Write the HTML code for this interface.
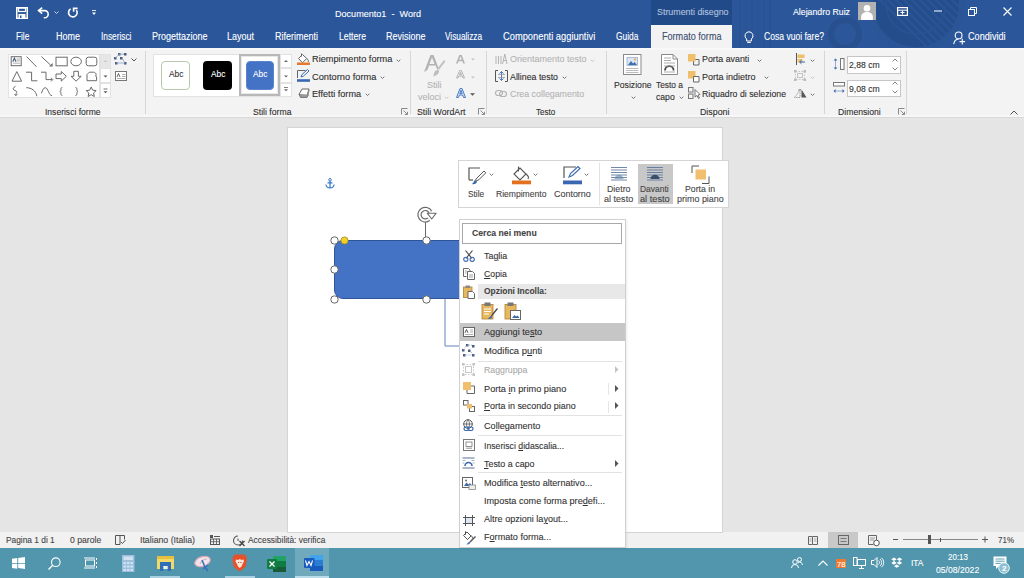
<!DOCTYPE html>
<html><head><meta charset="utf-8"><style>
html,body{margin:0;padding:0;width:1024px;height:578px;overflow:hidden;background:#e4e4e4;font-family:'Liberation Sans', sans-serif;}
.t{position:absolute;white-space:pre;line-height:1;transform-origin:0 0;-webkit-text-stroke:0.1px currentColor;}
svg{overflow:visible}
</style></head><body>
<div style="position:absolute;left:0px;top:0px;width:1024px;height:48px;background:#2b579a"></div><svg style="position:absolute;left:640px;top:0px;" width="384" height="48" viewBox="0 0 384 48">
<defs><clipPath id="tb"><rect x="0" y="0" width="384" height="48"/></clipPath><clipPath id="bc"><circle cx="276" cy="4" r="44"/></clipPath></defs>
<g clip-path="url(#tb)" fill="none">
<circle cx="276" cy="4" r="49" fill="#2a5596"/>
<circle cx="276" cy="4" r="43" fill="#244d8b"/>
<g clip-path="url(#bc)" stroke="#2a5495" stroke-width="2.4">
<path d="M200 -40l120 120M208 -40l120 120M216 -40l120 120M224 -40l120 120M232 -40l120 120M240 -40l120 120M248 -40l120 120M256 -40l120 120M264 -40l120 120M272 -40l120 120"/>
</g>
<circle cx="276" cy="4" r="30" stroke="#2a5396" stroke-width="1.5"/>
<circle cx="205" cy="34" r="14" stroke="#28508f" stroke-width="6"/>
<g stroke="#2a5394" stroke-width="2">
<line x1="100" y1="0" x2="100" y2="48"/><line x1="106" y1="0" x2="106" y2="48"/><line x1="112" y1="0" x2="112" y2="48"/><line x1="118" y1="0" x2="118" y2="48"/><line x1="124" y1="0" x2="124" y2="48"/><line x1="130" y1="0" x2="130" y2="48"/>
</g>
</g></svg><div style="position:absolute;left:651px;top:0px;width:81px;height:25px;background:#214a89"></div><div style="position:absolute;left:651px;top:25px;width:81px;height:23px;background:#f3f3f3"></div><svg style="position:absolute;left:16px;top:7px;" width="12" height="12" viewBox="0 0 12 12"><path d="M0.75 0.75h10.5v10.5h-10.5z" fill="none" stroke="#fff" stroke-width="1.5"/><rect x="2.5" y="1" width="7" height="3.5" fill="none" stroke="#fff" stroke-width="1.2"/><rect x="2.5" y="7" width="7" height="4" fill="#fff"/><rect x="4" y="8.5" width="1.5" height="2.5" fill="#2b579a"/></svg><svg style="position:absolute;left:36px;top:6px;" width="14" height="13" viewBox="0 0 14 13"><path d="M6.2 1.6L2.6 4.6L6.2 7.6" fill="none" stroke="#fff" stroke-width="1.6"/><path d="M2.6 4.6H8.6A3.6 3.6 0 0 1 8.6 11.8H7.8" fill="none" stroke="#fff" stroke-width="1.6"/></svg><svg style="position:absolute;left:54px;top:11px;" width="5" height="3" viewBox="0 0 5 3"><path d="M0.5 0.5l2 2l2-2" fill="none" stroke="#c9d6ea" stroke-width="1"/></svg><svg style="position:absolute;left:66px;top:6px;" width="13" height="13" viewBox="0 0 13 13"><path d="M4.6 2.9A4.3 4.3 0 1 0 10.4 4.1" fill="none" stroke="#fff" stroke-width="1.6"/><path d="M11.6 2.4H7.6V5.8" fill="none" stroke="#fff" stroke-width="1.6"/></svg><svg style="position:absolute;left:92px;top:10px;" width="5" height="6" viewBox="0 0 5 6"><rect x="0" y="0" width="4" height="1" fill="#dfe7f3"/><path d="M0 2.5h4l-2 2.5z" fill="#fff"/></svg><div class="t" style="left:335px;top:9px;font-size:9.9px;color:#ffffff;font-weight:normal;transform:scaleX(0.9181);">Documento1  -  Word</div><div class="t" style="left:656.5px;top:7px;font-size:9.6px;color:#b4c3de;font-weight:normal;transform:scaleX(0.9246);">Strumenti disegno</div><div class="t" style="left:793px;top:7px;font-size:9.8px;color:#ffffff;font-weight:normal;transform:scaleX(0.8946);">Alejandro Ruiz</div><div style="position:absolute;left:858px;top:2px;width:18px;height:18px;background:#b2b2b2"></div><svg style="position:absolute;left:858px;top:2px;" width="18" height="18" viewBox="0 0 18 18"><circle cx="9" cy="6.2" r="3.3" fill="#fff"/><path d="M3.2 18v-3.5a5.8 4.5 0 0 1 11.6 0v3.5z" fill="#fff"/></svg><svg style="position:absolute;left:897px;top:7px;" width="11" height="9" viewBox="0 0 11 9"><rect x="0.6" y="0.6" width="9.8" height="7.8" fill="none" stroke="#fff" stroke-width="1.2"/><line x1="0.6" y1="3.2" x2="10.4" y2="3.2" stroke="#fff" stroke-width="1"/><path d="M3.5 5.5h4M5.5 3.5v4" stroke="#fff" stroke-width="1"/></svg><svg style="position:absolute;left:934px;top:10px;" width="8" height="2" viewBox="0 0 8 2"><rect x="0" y="0.5" width="8" height="1" fill="#fff"/></svg><svg style="position:absolute;left:968px;top:7px;" width="9" height="9" viewBox="0 0 9 9"><rect x="0.5" y="2.5" width="6" height="6" fill="none" stroke="#fff" stroke-width="1"/><path d="M2.5 2.5v-2h6v6h-2" fill="none" stroke="#fff" stroke-width="1"/></svg><svg style="position:absolute;left:1003px;top:7px;" width="9" height="9" viewBox="0 0 9 9"><path d="M0.5 0.5l8 8M8.5 0.5l-8 8" stroke="#fff" stroke-width="1.1"/></svg><div class="t" style="left:15.6px;top:32px;font-size:10px;color:#ffffff;font-weight:normal;transform:scaleX(0.8248);">File</div><div class="t" style="left:55.7px;top:32px;font-size:10px;color:#ffffff;font-weight:normal;transform:scaleX(0.8993);">Home</div><div class="t" style="left:100.6px;top:32px;font-size:10px;color:#ffffff;font-weight:normal;transform:scaleX(0.8286);">Inserisci</div><div class="t" style="left:152.3px;top:32px;font-size:10px;color:#ffffff;font-weight:normal;transform:scaleX(0.8992);">Progettazione</div><div class="t" style="left:227.3px;top:32px;font-size:10px;color:#ffffff;font-weight:normal;transform:scaleX(0.8991);">Layout</div><div class="t" style="left:275.2px;top:32px;font-size:10px;color:#ffffff;font-weight:normal;transform:scaleX(0.8996);">Riferimenti</div><div class="t" style="left:339px;top:32px;font-size:10px;color:#ffffff;font-weight:normal;transform:scaleX(0.8670);">Lettere</div><div class="t" style="left:386.3px;top:32px;font-size:10px;color:#ffffff;font-weight:normal;transform:scaleX(0.8993);">Revisione</div><div class="t" style="left:444.5px;top:32px;font-size:10px;color:#ffffff;font-weight:normal;transform:scaleX(0.8251);">Visualizza</div><div class="t" style="left:502.5px;top:32px;font-size:10px;color:#ffffff;font-weight:normal;transform:scaleX(0.9318);">Componenti aggiuntivi</div><div class="t" style="left:615.6px;top:32px;font-size:10px;color:#ffffff;font-weight:normal;transform:scaleX(0.8393);">Guida</div><div class="t" style="left:661.5px;top:32px;font-size:10px;color:#3a4c6e;font-weight:normal;transform:scaleX(0.9073);">Formato forma</div><svg style="position:absolute;left:744px;top:31px;" width="10" height="13" viewBox="0 0 10 13"><path d="M5 0.8a4 4 0 0 0 -2.4 7.2v2h4.8v-2a4 4 0 0 0 -2.4 -7.2z" fill="none" stroke="#fff" stroke-width="1"/><path d="M3.2 11.5h3.6" stroke="#fff" stroke-width="1"/></svg><div class="t" style="left:763.7px;top:32px;font-size:10px;color:#ffffff;font-weight:normal;transform:scaleX(0.8566);">Cosa vuoi fare?</div><svg style="position:absolute;left:953px;top:31px;" width="13" height="14" viewBox="0 0 13 14"><circle cx="5.6" cy="4.4" r="3.4" fill="none" stroke="#fff" stroke-width="1.1"/><path d="M0.7 13.2c.5-3 2.3-5 4.9-5.2M8 8.6" fill="none" stroke="#fff" stroke-width="1.1"/><path d="M6.5 10.6h5.5M9.25 7.8v5.6" stroke="#fff" stroke-width="1.1"/></svg><div class="t" style="left:968px;top:32px;font-size:10px;color:#ffffff;font-weight:normal;transform:scaleX(0.9139);">Condividi</div><div style="position:absolute;left:0px;top:48px;width:1024px;height:69px;background:#f3f3f3"></div><div style="position:absolute;left:0px;top:115px;width:1024px;height:2px;background:#f7f7f7"></div><div style="position:absolute;left:0px;top:117px;width:1024px;height:1px;background:#d9d9d9"></div><div style="position:absolute;left:0px;top:48px;width:1024px;height:2px;background:#f8f8f8"></div><div style="position:absolute;left:145px;top:51px;width:1px;height:63px;background:#d6d6d6"></div><div style="position:absolute;left:410px;top:51px;width:1px;height:63px;background:#d6d6d6"></div><div style="position:absolute;left:486px;top:51px;width:1px;height:63px;background:#d6d6d6"></div><div style="position:absolute;left:605.5px;top:51px;width:1px;height:63px;background:#d6d6d6"></div><div style="position:absolute;left:824px;top:51px;width:1px;height:63px;background:#d6d6d6"></div><div style="position:absolute;left:906px;top:51px;width:1px;height:63px;background:#d6d6d6"></div><div class="t" style="left:44.5px;top:107px;font-size:9.4px;color:#2e2e2e;font-weight:normal;transform:scaleX(0.9105);">Inserisci forme</div><div class="t" style="left:252.8px;top:107px;font-size:9.4px;color:#2e2e2e;font-weight:normal;transform:scaleX(0.9235);">Stili forma</div><div class="t" style="left:417.3px;top:107px;font-size:9.4px;color:#2e2e2e;font-weight:normal;transform:scaleX(0.9341);">Stili WordArt</div><div class="t" style="left:536px;top:107px;font-size:9.4px;color:#2e2e2e;font-weight:normal;transform:scaleX(0.8614);">Testo</div><div class="t" style="left:700px;top:107px;font-size:9.4px;color:#2e2e2e;font-weight:normal;transform:scaleX(0.9403);">Disponi</div><div class="t" style="left:837.8px;top:107px;font-size:9.4px;color:#2e2e2e;font-weight:normal;transform:scaleX(0.9229);">Dimensioni</div><svg style="position:absolute;left:401px;top:108px;" width="7" height="7" viewBox="0 0 7 7"><path d="M0.5 6.5v-6h6" fill="none" stroke="#8a8a8a" stroke-width="1"/><path d="M2.5 2.5l4 4M3.8 6.5h2.7v-2.7" fill="none" stroke="#8a8a8a" stroke-width="1"/></svg><svg style="position:absolute;left:477.5px;top:108px;" width="7" height="7" viewBox="0 0 7 7"><path d="M0.5 6.5v-6h6" fill="none" stroke="#8a8a8a" stroke-width="1"/><path d="M2.5 2.5l4 4M3.8 6.5h2.7v-2.7" fill="none" stroke="#8a8a8a" stroke-width="1"/></svg><svg style="position:absolute;left:897.5px;top:108px;" width="7" height="7" viewBox="0 0 7 7"><path d="M0.5 6.5v-6h6" fill="none" stroke="#8a8a8a" stroke-width="1"/><path d="M2.5 2.5l4 4M3.8 6.5h2.7v-2.7" fill="none" stroke="#8a8a8a" stroke-width="1"/></svg><svg style="position:absolute;left:1010px;top:110px;" width="8" height="5" viewBox="0 0 8 5"><path d="M0.5 4.5l3.5-3.5l3.5 3.5" fill="none" stroke="#555" stroke-width="1"/></svg><div style="position:absolute;left:7.5px;top:53.5px;width:92px;height:44.5px;background:#fff;border:1px solid #e2e2e2;box-sizing:border-box"></div><div style="position:absolute;left:99.5px;top:53.5px;width:11px;height:15px;background:#e6e6e6;border:1px solid #e2e2e2;box-sizing:border-box"></div><div style="position:absolute;left:99.5px;top:68.2px;width:11px;height:15px;background:#fff;border:1px solid #e2e2e2;box-sizing:border-box"></div><div style="position:absolute;left:99.5px;top:83px;width:11px;height:15px;background:#fff;border:1px solid #e2e2e2;box-sizing:border-box"></div><svg style="position:absolute;left:99.5px;top:53.5px;" width="11" height="45" viewBox="0 0 11 45"><path d="M3.5 8l2-2l2 2z" fill="#c8c8c8"/><path d="M3.5 21.6h4l-2 2z" fill="#555"/><rect x="3.5" y="34.6" width="4" height="0.8" fill="#555"/><path d="M3.5 37.3h4l-2 2z" fill="#555"/></svg><svg style="position:absolute;left:7.5px;top:53.5px;" width="92" height="45" viewBox="0 0 92 45"><g fill="none" stroke="#6a6a6a" stroke-width="1">
<rect x="3.2" y="2.7" width="10" height="9"/><path d="M8.5 5h3.5M8.5 6.8h3.5M5 9.2h7" stroke="#9a9a9a" stroke-width="0.8"/><path d="M4.8 7.8l1.6-3.6l1.6 3.6" stroke="#4a5a78" stroke-width="1.1"/>
<path d="M18.5 2.5l10 10.3"/>
<path d="M33.3 2.5l9.3 8.6"/><path d="M41 12.6h3.6v-3.6z" fill="#6a6a6a" stroke="none"/>
<rect x="48" y="3.2" width="11.2" height="8.6"/>
<ellipse cx="68.1" cy="7.5" rx="5.3" ry="4.3"/>
<rect x="78.2" y="3.2" width="10.6" height="8.6" rx="2.2"/>
<path d="M4 27.2l4.8-9.6l4.8 9.6z"/>
<path d="M18 18.2h5.6v8.6h5.8"/>
<path d="M33 18.2h5v7.4h6"/><path d="M43 23.8l1.8 1.8l-1.8 1.8"/>
<path d="M48 20h5.3v-2.5l5 4.8l-5 4.8v-2.5h-5.3z"/>
<path d="M65.8 17.3h4.6v5h2.8l-5.1 4.8l-5.1-4.8h2.8z"/>
<path d="M79 20.5l2.3-2.3h4.2c1.8 0 2.6 1.3 2.6 2.5c0 .6-.2 1.1-.6 1.5l1.1 .5v4h-9.6z"/>
<path d="M7.5 32.3c-2.3 1.3-3 2.6-1.6 3.7c1.3 1 3.3 .7 2.8 2.5c-.3 1-1.3 1.5-.7 2.8M6.5 40.5l1.6 1l1.3-1.5"/>
<path d="M18.3 33.7c5.2 0 9.7 3 10.5 8.5"/>
<path d="M33.4 39.3c1.2-3.5 2.3-5.6 3.8-5.6c3 0 3.5 8 6.8 8"/>
<path d="M54.3 33.5c-1 0-1.4 .5-1.4 1.8s.1 1.7-1.1 2.2c1.2 .5 1.1 .9 1.1 2.2s.4 1.8 1.4 1.8"/>
<path d="M67.5 33.5c1 0 1.4 .5 1.4 1.8s-.1 1.7 1.1 2.2c-1.2 .5-1.1 .9-1.1 2.2s-.4 1.8-1.4 1.8"/>
<path d="M83.2 33l1.5 3.2l3.5.4l-2.6 2.4l.7 3.5l-3.1-1.8l-3.1 1.8l.7-3.5l-2.6-2.4l3.5-.4z"/>
</g></svg><svg style="position:absolute;left:114px;top:53px;" width="14" height="12" viewBox="0 0 14 12"><g fill="#4a5a80"><rect x="4" y="0" width="2.5" height="2.5"/><rect x="10" y="0" width="2.5" height="2.5"/><rect x="0" y="4" width="2.5" height="2.5"/><rect x="6" y="4" width="2.5" height="2.5"/><rect x="1" y="9" width="2.5" height="2.5"/><rect x="10" y="9" width="2.5" height="2.5"/></g><path d="M5 1.2h5M1.2 5.2l4-4M8 5l3 5M2 10h9" stroke="#8a9ac0" stroke-width="0.8" fill="none"/></svg><svg style="position:absolute;left:131px;top:58px;" width="6" height="4" viewBox="0 0 6 4"><path d="M0.5 0.5l2.5 2.5l2.5-2.5" fill="none" stroke="#555" stroke-width="1"/></svg><svg style="position:absolute;left:115px;top:71px;" width="12" height="10" viewBox="0 0 12 10"><rect x="0.5" y="0.5" width="11" height="9" fill="#fff" stroke="#777"/><path d="M7 3.5h3.5M7 5.5h3.5M2 7.5h8.5" stroke="#999" stroke-width="0.8"/><path d="M2 6l1.5-3.5l1.5 3.5" fill="none" stroke="#555" stroke-width="0.9"/></svg><div style="position:absolute;left:153.3px;top:53.6px;width:139px;height:43.7px;background:#fff;border:1px solid #e2e2e2;box-sizing:border-box"></div><div style="position:absolute;left:161px;top:61px;width:28.7px;height:28.5px;background:#fff;border:1px solid #b9c9ae;border-radius:4px;box-sizing:border-box"></div><div style="position:absolute;left:203px;top:61px;width:29px;height:28.5px;background:#000;border-radius:4px"></div><div style="position:absolute;left:239.2px;top:54.4px;width:41px;height:41.4px;background:#fff;border:2px solid #b8b8b8;box-sizing:border-box;box-shadow:inset 0 0 0 1px #e8e8e8"></div><div style="position:absolute;left:245.5px;top:61px;width:28.5px;height:28.5px;background:#4472c4;border:1px solid #5a84cc;border-radius:4px;box-sizing:border-box"></div><div class="t" style="left:168.7px;top:70px;font-size:9px;color:#333;font-weight:normal;transform:scaleX(0.9217);">Abc</div><div class="t" style="left:210.7px;top:70px;font-size:9px;color:#fff;font-weight:normal;transform:scaleX(0.9217);">Abc</div><div class="t" style="left:253px;top:70px;font-size:9px;color:#fff;font-weight:normal;transform:scaleX(0.9217);">Abc</div><div style="position:absolute;left:280.3px;top:54px;width:12px;height:14px;border:1px solid #e2e2e2;box-sizing:border-box;background:#fff"></div><div style="position:absolute;left:280.3px;top:68px;width:12px;height:14.5px;border:1px solid #e2e2e2;box-sizing:border-box;background:#fff"></div><div style="position:absolute;left:280.3px;top:82.5px;width:12px;height:14.8px;border:1px solid #e2e2e2;box-sizing:border-box;background:#fff"></div><svg style="position:absolute;left:280.3px;top:54px;" width="12" height="44" viewBox="0 0 12 44"><path d="M4 8l2-2l2 2z" fill="#666"/><path d="M4 21.5h4l-2 2z" fill="#666"/><rect x="4" y="33" width="4" height="0.8" fill="#666"/><path d="M4 35.2h4l-2 2z" fill="#666"/></svg><svg style="position:absolute;left:297px;top:52.5px;" width="13" height="12" viewBox="0 0 13 12"><path d="M5.5 1.5l-4 4l4 4.2l4.2-4.2z" fill="#fff" stroke="#666" stroke-width="1"/><path d="M4.5 0.5v3" stroke="#666" stroke-width="1"/><path d="M9.7 5.5c1.5 1 2 2.5 1.5 3.5" fill="none" stroke="#666" stroke-width="1"/><rect x="0" y="9.5" width="13" height="2.5" fill="#e57a2e"/></svg><svg style="position:absolute;left:297px;top:70px;" width="13" height="12" viewBox="0 0 13 12"><path d="M0.5 8v-7.5h8" fill="none" stroke="#666" stroke-width="1"/><path d="M4 7l1-2.5l5.5-5l1.5 1.5l-5.5 5z" fill="#fff" stroke="#3a68b0" stroke-width="1"/><rect x="0" y="9.2" width="13" height="2.6" fill="#3a68b0"/></svg><svg style="position:absolute;left:297.5px;top:88px;" width="12" height="10" viewBox="0 0 12 10"><path d="M1 6.5l3-5.5h7l-2 6.5z" fill="#fff" stroke="#666" stroke-width="1"/><path d="M1 6.5l1.5 3h6.5l1.5-3" fill="#9a9a9a" stroke="#666" stroke-width="0.8"/><path d="M9 7.5l2-6.5l0.5 1.5l-1.5 6z" fill="#8a8a8a"/></svg><div class="t" style="left:311.9px;top:54px;font-size:9.4px;color:#2e2e2e;font-weight:normal;transform:scaleX(0.9827);">Riempimento forma</div><div class="t" style="left:311.9px;top:72px;font-size:9.4px;color:#2e2e2e;font-weight:normal;transform:scaleX(0.9886);">Contorno forma</div><div class="t" style="left:311.9px;top:89px;font-size:9.4px;color:#2e2e2e;font-weight:normal;transform:scaleX(0.9747);">Effetti forma</div><svg style="position:absolute;left:395.8px;top:58.5px;" width="5" height="3" viewBox="0 0 5 3"><path d="M0.7 0.7l1.8 1.8l1.8-1.8" fill="none" stroke="#666" stroke-width="0.9"/></svg><svg style="position:absolute;left:380.3px;top:75.8px;" width="5" height="3" viewBox="0 0 5 3"><path d="M0.7 0.7l1.8 1.8l1.8-1.8" fill="none" stroke="#666" stroke-width="0.9"/></svg><svg style="position:absolute;left:365.3px;top:93px;" width="5" height="3" viewBox="0 0 5 3"><path d="M0.7 0.7l1.8 1.8l1.8-1.8" fill="none" stroke="#666" stroke-width="0.9"/></svg><svg style="position:absolute;left:423px;top:54px;" width="23" height="23" viewBox="0 0 23 23"><path d="M1 18l6.5-17h3l5.2 13.5l-1.2 1.6l-1.8-4.6h-6.6l-1.7 4.5z M6.5 10h5l-2.5-6.8z" fill="#b3b3b3"/><path d="M14.5 14.5l6.5-8.5l1.5 1.3l-6.5 8.5z" fill="#c0c0c0"/><path d="M11 19.5c.5-2 2-3.5 3.5-3.5c1 0 1.8 .8 1.5 2c-.5 2-3 3.5-6 4.5c.8-1 .8-2 1-3z" fill="#bdbdbd"/></svg><div class="t" style="left:426.7px;top:80px;font-size:9.4px;color:#b3b3b3;font-weight:normal;transform:scaleX(0.9597);">Stili</div><div class="t" style="left:418px;top:92px;font-size:9.4px;color:#b3b3b3;font-weight:normal;transform:scaleX(0.9596);">veloci</div><svg style="position:absolute;left:444px;top:96px;" width="5" height="3" viewBox="0 0 5 3"><path d="M0.7 0.7l1.8 1.8l1.8-1.8" fill="none" stroke="#c0c0c0" stroke-width="0.9"/></svg><svg style="position:absolute;left:456px;top:54.5px;" width="9" height="8.5" viewBox="0 0 9 8.5"><path d="M0 8.5l3.3-8.5h2.4l3.3 8.5h-1.8l-.8-2.2h-3.8l-.8 2.2z M3.2 4.8h2.6l-1.3-3.5z" fill="#b3b3b3"/></svg><svg style="position:absolute;left:456px;top:70px;" width="9" height="8.5" viewBox="0 0 9 8.5"><path d="M0.5 8l3.2-7.5h1.6l3.2 7.5h-1.5l-.8-2h-3.4l-.8 2z M3.5 4.8h2l-1-2.6z" fill="none" stroke="#b3b3b3" stroke-width="1"/></svg><svg style="position:absolute;left:455.5px;top:88px;" width="10" height="10" viewBox="0 0 10 10"><path d="M0.5 9.5l3.5-9h2l3.5 9h-2l-.9-2.5h-3.2l-.9 2.5z M3.8 5.5h2.4l-1.2-3.3z" fill="#dce6f4" stroke="#4a7cc4" stroke-width="1"/></svg><svg style="position:absolute;left:471px;top:58px;" width="4" height="3" viewBox="0 0 4 3"><path d="M0 0.5h4l-2 2z" fill="#c4c4c4"/></svg><svg style="position:absolute;left:471px;top:75.5px;" width="4" height="3" viewBox="0 0 4 3"><path d="M0 0.5h4l-2 2z" fill="#c4c4c4"/></svg><svg style="position:absolute;left:470px;top:92.5px;" width="5" height="3" viewBox="0 0 5 3"><path d="M0 0.3h5l-2.5 2.5z" fill="#555"/></svg><svg style="position:absolute;left:494.5px;top:52.5px;" width="12" height="12" viewBox="0 0 12 12"><g stroke="#b3b3b3" stroke-width="1" fill="none"><path d="M1 11v-8M3.5 11v-8M6 11v-8"/><path d="M7.5 11l2.3-10l2.2 10M8.3 7.5h3"/></g></svg><svg style="position:absolute;left:494.5px;top:70px;" width="13" height="12" viewBox="0 0 13 12"><path d="M3 0.5h-2.5v11h2.5M10 0.5h2.5v11h-2.5" fill="none" stroke="#555" stroke-width="1"/><path d="M6.5 1.5v9" stroke="#4a7cc4" stroke-width="1"/><path d="M4.5 3.5l2-2l2 2M4.5 8.5l2 2l2-2" fill="none" stroke="#4a7cc4" stroke-width="1"/><path d="M3 4.5h7M3 7.5h7" stroke="#999" stroke-width="0.8"/></svg><svg style="position:absolute;left:494.5px;top:89.5px;" width="12" height="7" viewBox="0 0 12 7"><rect x="0.5" y="0.5" width="7" height="5" rx="2.5" fill="none" stroke="#b3b3b3" stroke-width="1.2"/><rect x="4.5" y="1.5" width="7" height="5" rx="2.5" fill="none" stroke="#b3b3b3" stroke-width="1.2"/></svg><div class="t" style="left:509.5px;top:54px;font-size:9.4px;color:#b3b3b3;font-weight:normal;transform:scaleX(0.9594);">Orientamento testo</div><div class="t" style="left:509.5px;top:72px;font-size:9.4px;color:#2e2e2e;font-weight:normal;transform:scaleX(0.9397);">Allinea testo</div><div class="t" style="left:509.5px;top:89px;font-size:9.4px;color:#b3b3b3;font-weight:normal;transform:scaleX(0.9428);">Crea collegamento</div><svg style="position:absolute;left:590px;top:58.5px;" width="5" height="3" viewBox="0 0 5 3"><path d="M0.7 0.7l1.8 1.8l1.8-1.8" fill="none" stroke="#c0c0c0" stroke-width="0.9"/></svg><svg style="position:absolute;left:561.5px;top:75.8px;" width="5" height="3" viewBox="0 0 5 3"><path d="M0.7 0.7l1.8 1.8l1.8-1.8" fill="none" stroke="#666" stroke-width="0.9"/></svg><svg style="position:absolute;left:622.5px;top:54px;" width="19" height="21" viewBox="0 0 19 21"><rect x="0.5" y="0.5" width="17.5" height="20" fill="#fff" stroke="#8a8a8a"/><rect x="4" y="3.5" width="10.5" height="8" fill="#dbe6f2" stroke="#9ab0cc" stroke-width="0.8"/><path d="M5 11l3-4l2 2.5l1.5-1.5l2.5 3z" fill="#3e6fb0"/><circle cx="12" cy="5.5" r="1" fill="#f0a030"/><path d="M3 14.5h12.5M3 16.5h12.5M3 18.5h12.5" stroke="#aaa" stroke-width="0.8"/></svg><div class="t" style="left:613.8px;top:80px;font-size:9.4px;color:#2e2e2e;font-weight:normal;transform:scaleX(0.9224);">Posizione</div><svg style="position:absolute;left:630.5px;top:95.5px;" width="5" height="3" viewBox="0 0 5 3"><path d="M0.7 0.7l1.8 1.8l1.8-1.8" fill="none" stroke="#666" stroke-width="0.9"/></svg><svg style="position:absolute;left:660.5px;top:54px;" width="17" height="21" viewBox="0 0 17 21"><path d="M0.5 0.5h11.5l4.5 4.5v15.5h-16z" fill="#fff" stroke="#8a8a8a"/><path d="M12 0.5v4.5h4.5" fill="none" stroke="#8a8a8a"/><path d="M3 4h7M3 6.5h7M3 9h11M3 18h11" stroke="#999" stroke-width="0.8"/><path d="M4 16.5a4.3 4.3 0 0 1 8.6 0" fill="none" stroke="#444" stroke-width="1.8"/><path d="M3 12h11" stroke="#999" stroke-width="0.8"/></svg><div class="t" style="left:655.5px;top:80px;font-size:9.4px;color:#2e2e2e;font-weight:normal;transform:scaleX(0.8930);">Testo a</div><div class="t" style="left:655.5px;top:92px;font-size:9.4px;color:#2e2e2e;font-weight:normal;transform:scaleX(0.9192);">capo</div><svg style="position:absolute;left:678.5px;top:95.5px;" width="5" height="3" viewBox="0 0 5 3"><path d="M0.7 0.7l1.8 1.8l1.8-1.8" fill="none" stroke="#666" stroke-width="0.9"/></svg><svg style="position:absolute;left:688px;top:53.5px;" width="12" height="11" viewBox="0 0 12 11"><path d="M5.5 5.5h5.5v5.5h-5.5z" fill="none" stroke="#666" stroke-width="1"/><rect x="0" y="0" width="7.5" height="7.5" fill="#f0bf6c"/></svg><svg style="position:absolute;left:688px;top:70.5px;" width="12" height="11" viewBox="0 0 12 11"><rect x="0" y="0" width="7.5" height="7.5" fill="#f0bf6c"/><path d="M5.5 5.5h5.5v5.5h-5.5z" fill="#fff" stroke="#666" stroke-width="1"/></svg><svg style="position:absolute;left:687.5px;top:87px;" width="13" height="13" viewBox="0 0 13 13"><g fill="none" stroke="#777" stroke-width="1"><rect x="0.5" y="0.5" width="4.5" height="4.5"/><rect x="0.5" y="7" width="4.5" height="4.5"/></g><path d="M7 2.5l5 5l-2 .5l1.5 3l-1 .5l-1.5-3l-2 1.5z" fill="#fff" stroke="#666" stroke-width="0.9"/></svg><div class="t" style="left:701.9px;top:54px;font-size:9.4px;color:#2e2e2e;font-weight:normal;transform:scaleX(0.9454);">Porta avanti</div><div class="t" style="left:701.9px;top:72px;font-size:9.4px;color:#2e2e2e;font-weight:normal;transform:scaleX(0.9612);">Porta indietro</div><div class="t" style="left:701.9px;top:89px;font-size:9.4px;color:#2e2e2e;font-weight:normal;transform:scaleX(0.9327);">Riquadro di selezione</div><svg style="position:absolute;left:757px;top:58.5px;" width="5" height="3" viewBox="0 0 5 3"><path d="M0.7 0.7l1.8 1.8l1.8-1.8" fill="none" stroke="#666" stroke-width="0.9"/></svg><svg style="position:absolute;left:764px;top:75.8px;" width="5" height="3" viewBox="0 0 5 3"><path d="M0.7 0.7l1.8 1.8l1.8-1.8" fill="none" stroke="#666" stroke-width="0.9"/></svg><svg style="position:absolute;left:795.5px;top:52.5px;" width="10" height="12" viewBox="0 0 10 12"><path d="M0.5 0v12" stroke="#555" stroke-width="1"/><rect x="1.5" y="1.5" width="7" height="3.5" fill="#f0bf6c"/><rect x="1.5" y="6" width="5" height="3.5" fill="#f0bf6c"/><path d="M9 9h-5M5.5 7.2l-2 1.8l2 1.8" fill="none" stroke="#3a68b0" stroke-width="1"/></svg><svg style="position:absolute;left:809.5px;top:58.5px;" width="5" height="3" viewBox="0 0 5 3"><path d="M0.7 0.7l1.8 1.8l1.8-1.8" fill="none" stroke="#666" stroke-width="0.9"/></svg><svg style="position:absolute;left:793.5px;top:70px;" width="12" height="11" viewBox="0 0 12 11"><g fill="none" stroke="#c4c4c4" stroke-width="1"><rect x="1.5" y="1.5" width="9" height="8" stroke-dasharray="1.5 1.5"/><rect x="3.5" y="3.5" width="5" height="4"/></g><g fill="#bbb"><rect x="0" y="0" width="2.5" height="2.5"/><rect x="9.5" y="0" width="2.5" height="2.5"/><rect x="0" y="8.5" width="2.5" height="2.5"/><rect x="9.5" y="8.5" width="2.5" height="2.5"/></g></svg><svg style="position:absolute;left:809.5px;top:75.8px;" width="5" height="3" viewBox="0 0 5 3"><path d="M0.7 0.7l1.8 1.8l1.8-1.8" fill="none" stroke="#c0c0c0" stroke-width="0.9"/></svg><svg style="position:absolute;left:793.5px;top:88.5px;" width="13" height="9" viewBox="0 0 13 9"><path d="M0.5 8.5l5.5-7.5v7.5z" fill="none" stroke="#888" stroke-width="0.9" stroke-dasharray="1.4 1"/><path d="M7.5 8.5v-8l5 8z" fill="#555"/><path d="M4 1.5a3 3 0 0 1 3-1" fill="none" stroke="#777" stroke-width="0.8"/></svg><svg style="position:absolute;left:809.5px;top:92.5px;" width="5" height="3" viewBox="0 0 5 3"><path d="M0.7 0.7l1.8 1.8l1.8-1.8" fill="none" stroke="#666" stroke-width="0.9"/></svg><svg style="position:absolute;left:832.5px;top:58px;" width="12" height="12" viewBox="0 0 12 12"><path d="M2.5 0.5l2 2h-4z M2.5 11.5l2-2h-4z" fill="#3a68b0"/><path d="M2.5 2.5v7" stroke="#3a68b0" stroke-width="1" stroke-dasharray="1 1"/><rect x="7.5" y="0.5" width="3.5" height="11" fill="#fff" stroke="#777" stroke-width="1"/></svg><svg style="position:absolute;left:832.5px;top:82px;" width="12" height="12" viewBox="0 0 12 12"><rect x="0.5" y="0.5" width="11" height="3.5" fill="#fff" stroke="#777" stroke-width="1"/><path d="M0.5 9l2-2v4z M11.5 9l-2-2v4z" fill="#3a68b0"/><path d="M2.5 9h7" stroke="#3a68b0" stroke-width="1" stroke-dasharray="1 1"/></svg><div style="position:absolute;left:847.2px;top:56.2px;width:53.4px;height:17.4px;background:#fff;border:1px solid #c6c6c6;box-sizing:border-box"></div><div style="position:absolute;left:847.2px;top:80px;width:53.4px;height:16.5px;background:#fff;border:1px solid #c6c6c6;box-sizing:border-box"></div><div class="t" style="left:849.2px;top:60px;font-size:9.4px;color:#2e2e2e;font-weight:normal;transform:scaleX(0.9233);">2,88 cm</div><div class="t" style="left:849.2px;top:84px;font-size:9.4px;color:#2e2e2e;font-weight:normal;transform:scaleX(0.9233);">9,08 cm</div><svg style="position:absolute;left:891.5px;top:57.5px;" width="6" height="14" viewBox="0 0 6 14"><path d="M0.5 3.5l2.5-2.5l2.5 2.5M0.5 9.5l2.5 2.5l2.5-2.5" fill="none" stroke="#777" stroke-width="0.9"/></svg><svg style="position:absolute;left:891.5px;top:81px;" width="6" height="14" viewBox="0 0 6 14"><path d="M0.5 3.5l2.5-2.5l2.5 2.5M0.5 9.5l2.5 2.5l2.5-2.5" fill="none" stroke="#777" stroke-width="0.9"/></svg><div style="position:absolute;left:0px;top:531.5px;width:1024px;height:16.5px;background:#f1f1f1"></div><div style="position:absolute;left:828px;top:531.5px;width:30px;height:16px;background:#c8c8c8"></div><div class="t" style="left:6.3px;top:536px;font-size:9px;color:#444;font-weight:normal;transform:scaleX(0.9268);">Pagina 1 di 1</div><div class="t" style="left:70px;top:536px;font-size:9px;color:#444;font-weight:normal;transform:scaleX(0.9591);">0 parole</div><div class="t" style="left:139.5px;top:536px;font-size:9px;color:#444;font-weight:normal;transform:scaleX(0.9729);">Italiano (Italia)</div><div class="t" style="left:247.5px;top:536px;font-size:9px;color:#444;font-weight:normal;transform:scaleX(0.9310);">Accessibilità: verifica</div><svg style="position:absolute;left:115px;top:534.5px;" width="12" height="10" viewBox="0 0 12 10"><path d="M0.5 0.5h4.5v9h-4.5z M5 0.5h4.5v4" fill="none" stroke="#555" stroke-width="1"/><path d="M6 7l1.5 1.5l3-3.5" fill="none" stroke="#555" stroke-width="1"/></svg><svg style="position:absolute;left:209.5px;top:534.5px;" width="10" height="10" viewBox="0 0 10 10"><rect x="0" y="0" width="3" height="3" fill="#555"/><path d="M4 1.5h6" stroke="#555" stroke-width="1"/><rect x="0.5" y="4" width="9" height="5.5" fill="none" stroke="#555" stroke-width="1"/><path d="M3.5 4v5.5M6.5 4v5.5M0.5 6.7h9" stroke="#555" stroke-width="0.8"/></svg><svg style="position:absolute;left:232.5px;top:534.5px;" width="12" height="11" viewBox="0 0 12 11"><path d="M5 1a4.5 4.5 0 1 0 4.5 4.5" fill="none" stroke="#555" stroke-width="1.1"/><path d="M5 3l1 2.5l-2 0z" fill="#555"/><path d="M6.5 6l5 5M11.5 6l-5 5" stroke="#444" stroke-width="1.3"/></svg><svg style="position:absolute;left:808px;top:534.5px;" width="10" height="10" viewBox="0 0 10 10"><path d="M0.5 1.5h4v8h-4zM5 1.5h4.5v8h-4.5" fill="none" stroke="#666" stroke-width="1"/><path d="M1.5 4h2M1.5 6h2M6 4h2.5M6 6h2.5" stroke="#888" stroke-width="0.7"/></svg><svg style="position:absolute;left:838px;top:534.5px;" width="11" height="10" viewBox="0 0 11 10"><rect x="0.5" y="0.5" width="10" height="9" fill="none" stroke="#666" stroke-width="1"/><path d="M2.5 3.5h6M2.5 6.5h6" stroke="#777" stroke-width="1"/></svg><svg style="position:absolute;left:868px;top:534.5px;" width="12" height="11" viewBox="0 0 12 11"><path d="M0.5 0.5h8v5M0.5 0.5v9h5" fill="none" stroke="#666" stroke-width="1"/><path d="M2 3h5M2 5h4" stroke="#888" stroke-width="0.8"/><circle cx="8.5" cy="8" r="2.8" fill="#fff" stroke="#555" stroke-width="1"/></svg><div style="position:absolute;left:893px;top:539px;width:5px;height:1px;background:#555"></div><div style="position:absolute;left:903px;top:539.3px;width:75px;height:1px;background:#888"></div><div style="position:absolute;left:928px;top:535px;width:3px;height:8.5px;background:#555"></div><div style="position:absolute;left:940px;top:537.5px;width:1px;height:4px;background:#555"></div><svg style="position:absolute;left:981.5px;top:535.5px;" width="6" height="7" viewBox="0 0 6 7"><path d="M0 3.5h6M3 0.5v6" stroke="#555" stroke-width="1"/></svg><div class="t" style="left:997.5px;top:536px;font-size:9px;color:#444;font-weight:normal;transform:scaleX(0.8881);">71%</div><div style="position:absolute;left:0px;top:548px;width:1024px;height:30px;background:#5196ad"></div><div style="position:absolute;left:295px;top:548px;width:34px;height:30px;background:#70a8bc"></div><svg style="position:absolute;left:12px;top:557px;" width="13" height="12" viewBox="0 0 13 12"><path d="M0 1.8l5.3-.8v5h-5.3zM6.2 0.9l6.8-.9v6h-6.8zM0 6.8h5.3v5l-5.3-.8zM6.2 6.8h6.8v5.2l-6.8-.9z" fill="#fff"/></svg><svg style="position:absolute;left:48px;top:556.5px;" width="13" height="13" viewBox="0 0 13 13"><circle cx="7.8" cy="5.2" r="4.3" fill="none" stroke="#fff" stroke-width="1.1"/><path d="M4.7 8.3l-4.2 4.2" stroke="#fff" stroke-width="1.3"/></svg><svg style="position:absolute;left:83.5px;top:556.5px;" width="14" height="12" viewBox="0 0 14 12"><rect x="1.5" y="3" width="9" height="6" fill="none" stroke="#fff" stroke-width="1"/><path d="M0 1h11M0 11h11M12.5 1v2M12.5 5v2M12.5 9v2" stroke="#fff" stroke-width="1"/></svg><svg style="position:absolute;left:122px;top:554.5px;" width="12.5" height="17" viewBox="0 0 12.5 17"><rect x="0" y="0" width="12.5" height="17" fill="#9cc0de"/><rect x="1.5" y="1.5" width="9.5" height="3.5" fill="#d0e2f2"/><g fill="#d0e2f2"><rect x="1.5" y="7" width="2.5" height="2"/><rect x="5" y="7" width="2.5" height="2"/><rect x="8.5" y="7" width="2.5" height="2"/><rect x="1.5" y="10.5" width="2.5" height="2"/><rect x="5" y="10.5" width="2.5" height="2"/><rect x="8.5" y="10.5" width="2.5" height="2"/><rect x="1.5" y="14" width="2.5" height="2"/><rect x="5" y="14" width="2.5" height="2"/><rect x="8.5" y="14" width="2.5" height="2"/></g></svg><svg style="position:absolute;left:157px;top:556px;" width="17" height="15" viewBox="0 0 17 15"><rect x="0" y="0" width="17" height="13" fill="#f3d86a"/><rect x="0" y="0" width="17" height="3" fill="#e8c040"/><path d="M3 6h11v9h-3.5v-5h-4v5h-3.5z" fill="#2f6fb8"/><rect x="6.5" y="10" width="4" height="3" fill="#e8f0f4"/></svg><div style="position:absolute;left:150px;top:576px;width:30px;height:2px;background:#a8d0e0"></div><svg style="position:absolute;left:193.5px;top:555px;" width="18" height="17" viewBox="0 0 18 17"><ellipse cx="8.5" cy="6.5" rx="8" ry="4.8" fill="#f2e4ea" stroke="#d8a8b8" stroke-width="1.2" transform="rotate(-18 8.5 6.5)"/><path d="M6 9c1-3 4-5 7-5" fill="none" stroke="#c89aa8" stroke-width="0.8"/><path d="M8 5l2.5 6M10 11l4 5M14 10l-5 4" stroke="#2f72c0" stroke-width="1.5"/></svg><svg style="position:absolute;left:232px;top:554px;" width="15.5" height="17.5" viewBox="0 0 15.5 17.5"><path d="M3 0.5h9.5l2.5 3l-.5 2l.5 1l-1.5 6.5l-5.8 4.5l-5.8-4.5l-1.5-6.5l.5-1l-.5-2z" fill="#e5522a"/><path d="M4 5.5l2 .5l1.75-1l1.75 1l2-.5l.5 2l-1.5 2.5l-1 2.5l-1.75 1.5l-1.75-1.5l-1-2.5l-1.5-2.5z" fill="#fbe6dc"/><path d="M6 8.5h1.2M8.3 8.5h1.2" stroke="#e5522a" stroke-width="1"/></svg><div style="position:absolute;left:225px;top:576px;width:30px;height:2px;background:#a8d0e0"></div><svg style="position:absolute;left:267px;top:555.5px;" width="19" height="16" viewBox="0 0 19 16"><rect x="6" y="0" width="13" height="16" rx="1" fill="#21a366"/><rect x="6" y="5" width="13" height="6" fill="#107c41"/><rect x="6" y="11" width="13" height="5" fill="#185c37"/><rect x="0" y="3" width="10" height="10" rx="1" fill="#107c41"/><path d="M2.5 5.5l5 5M7.5 5.5l-5 5" stroke="#fff" stroke-width="1.4"/></svg><svg style="position:absolute;left:303.5px;top:555px;" width="19" height="16" viewBox="0 0 19 16"><rect x="6" y="0" width="13" height="16" rx="1" fill="#41a5ee"/><rect x="6" y="5" width="13" height="6" fill="#2b7cd3"/><rect x="6" y="11" width="13" height="5" fill="#185abd"/><rect x="0" y="3" width="10.5" height="10" rx="1" fill="#185abd"/><path d="M1.5 5.5l1.5 5l2-4l2 4l1.5-5" fill="none" stroke="#fff" stroke-width="1.1"/></svg><div style="position:absolute;left:295px;top:576px;width:34px;height:2px;background:#b8dcea"></div><svg style="position:absolute;left:790.5px;top:557px;" width="12" height="11" viewBox="0 0 12 11"><circle cx="4" cy="5" r="2.3" fill="none" stroke="#fff" stroke-width="1"/><path d="M0.5 11a3.5 3.5 0 0 1 7 0" fill="none" stroke="#fff" stroke-width="1"/><circle cx="8.5" cy="2.5" r="2" fill="none" stroke="#fff" stroke-width="1"/><path d="M7 5.5a3 3 0 0 1 4.5 2.5" fill="none" stroke="#fff" stroke-width="1"/></svg><svg style="position:absolute;left:818px;top:560px;" width="10" height="6" viewBox="0 0 10 6"><path d="M0.5 5.5l4.5-4.5l4.5 4.5" fill="none" stroke="#fff" stroke-width="1.1"/></svg><div style="position:absolute;left:836px;top:558.5px;width:10px;height:9.5px;background:#f07a30"></div><div class="t" style="left:836.8px;top:561px;font-size:8px;color:#fff;font-weight:normal;transform:scaleX(0.9544);">78</div><svg style="position:absolute;left:853px;top:557px;" width="13" height="12" viewBox="0 0 13 12"><rect x="0.5" y="0.5" width="3.5" height="8" fill="none" stroke="#fff" stroke-width="1"/><rect x="4.5" y="2.5" width="8" height="6" fill="none" stroke="#fff" stroke-width="1"/><path d="M8.5 8.5v2.5M6 11.5h5" stroke="#fff" stroke-width="1"/></svg><svg style="position:absolute;left:871px;top:557px;" width="12" height="11" viewBox="0 0 12 11"><path d="M0.5 3.5h2.5l3-3v10l-3-3h-2.5z" fill="none" stroke="#fff" stroke-width="1"/><path d="M7.5 3.5a2.5 2.5 0 0 1 0 4M9 2a4.5 4.5 0 0 1 0 7M10.5 .8a6 6 0 0 1 0 9.4" fill="none" stroke="#fff" stroke-width="0.9"/></svg><svg style="position:absolute;left:890.5px;top:557px;" width="11.5" height="11" viewBox="0 0 11.5 11"><path d="M3 0.5l-2.7 1.8l2.7 1.8l2.7-1.8zM8.5 0.5l-2.7 1.8l2.7 1.8l2.7-1.8zM3 4.1l-2.7 1.8l2.7 1.8l2.7-1.8zM8.5 4.1l-2.7 1.8l2.7 1.8l2.7-1.8zM5.75 7.5l-2.7 1.8l2.7 1.5l2.7-1.5z" fill="#fff"/></svg><div class="t" style="left:911px;top:559px;font-size:9px;color:#fff;font-weight:normal;transform:scaleX(0.9368);">ITA</div><div class="t" style="left:947.5px;top:553px;font-size:9px;color:#fff;font-weight:normal;transform:scaleX(0.8877);">20:13</div><div class="t" style="left:936px;top:566px;font-size:9px;color:#fff;font-weight:normal;transform:scaleX(0.9590);">05/08/2022</div><svg style="position:absolute;left:993px;top:556px;" width="18" height="18" viewBox="0 0 18 18"><path d="M0.5 0.5h13v9.5h-7.5l-3 3v-3h-2.5z" fill="#fff"/><path d="M2.5 3h9M2.5 5.2h9M2.5 7.4h6" stroke="#4d93ad" stroke-width="0.9"/><circle cx="11" cy="12" r="5.3" fill="#8cbfd2" stroke="#e8f4f8" stroke-width="1"/></svg><div class="t" style="left:1001.8px;top:565px;font-size:8px;color:#fff;font-weight:bold;transform:scaleX(1.0105);">2</div><div style="position:absolute;left:0px;top:118px;width:1024px;height:413.5px;background:#e5e5e5"></div><div style="position:absolute;left:288px;top:127.5px;width:434px;height:404px;background:#fff;box-shadow:0 0 0 1px #d4d4d4"></div><svg style="position:absolute;left:324.5px;top:178px;" width="10" height="11" viewBox="0 0 10 11"><circle cx="5" cy="1.8" r="1.3" fill="none" stroke="#3a78c8" stroke-width="1"/><path d="M5 3v7M2.5 4.8h5M0.8 6.5c.5 2.5 2 3.5 4.2 3.5s3.7-1 4.2-3.5" fill="none" stroke="#3a78c8" stroke-width="1.2"/></svg><div style="position:absolute;left:334px;top:240px;width:150px;height:59px;background:#4472c4;border:1px solid #2f5597;border-radius:9px;box-sizing:border-box"></div><svg style="position:absolute;left:444px;top:298px;" width="16" height="50" viewBox="0 0 16 50"><path d="M1 1v47h15" fill="none" stroke="#6383b8" stroke-width="1"/></svg><svg style="position:absolute;left:416px;top:205px;" width="22" height="36" viewBox="0 0 22 36"><path d="M9.5 17v19" stroke="#6a6a6a" stroke-width="1"/><path d="M14.3 6.8A5.8 5.8 0 1 0 12.8 14.3" fill="none" stroke="#6a6a6a" stroke-width="4.4"/><path d="M14.3 6.8A5.8 5.8 0 1 0 12.8 14.3" fill="none" stroke="#fff" stroke-width="2"/><path d="M11.2 8.2h9l-4.5 5.8z" fill="#fff" stroke="#6a6a6a" stroke-width="1.1" stroke-linejoin="round"/><path d="M13.5 9.2h4.2l-2.1 2.7z" fill="#fff"/></svg><svg style="position:absolute;left:329.5px;top:235.5px;" width="9" height="9" viewBox="0 0 9 9"><circle cx="4.5" cy="4.5" r="3.7" fill="#fff" stroke="#666" stroke-width="1"/></svg><svg style="position:absolute;left:421.5px;top:235.5px;" width="9" height="9" viewBox="0 0 9 9"><circle cx="4.5" cy="4.5" r="3.7" fill="#fff" stroke="#666" stroke-width="1"/></svg><svg style="position:absolute;left:329.5px;top:265.0px;" width="9" height="9" viewBox="0 0 9 9"><circle cx="4.5" cy="4.5" r="3.7" fill="#fff" stroke="#666" stroke-width="1"/></svg><svg style="position:absolute;left:329.5px;top:294.5px;" width="9" height="9" viewBox="0 0 9 9"><circle cx="4.5" cy="4.5" r="3.7" fill="#fff" stroke="#666" stroke-width="1"/></svg><svg style="position:absolute;left:421.5px;top:294.5px;" width="9" height="9" viewBox="0 0 9 9"><circle cx="4.5" cy="4.5" r="3.7" fill="#fff" stroke="#666" stroke-width="1"/></svg><svg style="position:absolute;left:339.5px;top:235.5px;" width="9" height="9" viewBox="0 0 9 9"><circle cx="4.5" cy="4.5" r="3.6" fill="#f2d028" stroke="#a08a20" stroke-width="0.8"/></svg><div style="position:absolute;left:458px;top:160px;width:271px;height:47.5px;background:#fff;border:1px solid #d4d4d4;box-sizing:border-box"></div><div style="position:absolute;left:598.5px;top:163px;width:1px;height:42px;background:#e2e2e2"></div><div style="position:absolute;left:637.5px;top:163.6px;width:35.5px;height:40.8px;background:#c8c8c8"></div><svg style="position:absolute;left:468px;top:166.5px;" width="20" height="18" viewBox="0 0 20 18"><path d="M1 13v-12h11" fill="none" stroke="#555" stroke-width="1.2"/><path d="M1 13h4" stroke="#555" stroke-width="1.2"/><path d="M6 15l3-4l7-7l1.8 1.8l-7 7z" fill="#fff" stroke="#555" stroke-width="1"/><path d="M4 17c1.5-1 2-3 4-3.5l1 1.5c-1 2-3 2.5-5 2z" fill="#3a68b0"/></svg><svg style="position:absolute;left:488.5px;top:172.5px;" width="5" height="3" viewBox="0 0 5 3"><path d="M0.7 0.7l1.8 1.8l1.8-1.8" fill="none" stroke="#666" stroke-width="0.9"/></svg><svg style="position:absolute;left:512px;top:165.5px;" width="19" height="19" viewBox="0 0 19 19"><path d="M8 2l-6 6l6 6l6-6z" fill="#fff" stroke="#555" stroke-width="1.1"/><path d="M6.5 0.5v5" stroke="#555" stroke-width="1.1"/><path d="M14 8c2 1.5 3 3.5 2 5" fill="none" stroke="#555" stroke-width="1.1"/><rect x="0" y="14.5" width="19" height="3.8" fill="#e2701e"/></svg><svg style="position:absolute;left:533px;top:172.5px;" width="5" height="3" viewBox="0 0 5 3"><path d="M0.7 0.7l1.8 1.8l1.8-1.8" fill="none" stroke="#666" stroke-width="0.9"/></svg><svg style="position:absolute;left:562.5px;top:165.5px;" width="19" height="19" viewBox="0 0 19 19"><path d="M1 12v-11h12" fill="none" stroke="#555" stroke-width="1.2"/><path d="M6 11l1.5-3.5l7.5-7l2 2l-7.5 7z" fill="#fff" stroke="#3a68b0" stroke-width="1.1"/><rect x="0" y="14.5" width="19" height="3.8" fill="#3a68b0"/></svg><svg style="position:absolute;left:584px;top:172.5px;" width="5" height="3" viewBox="0 0 5 3"><path d="M0.7 0.7l1.8 1.8l1.8-1.8" fill="none" stroke="#666" stroke-width="0.9"/></svg><svg style="position:absolute;left:611px;top:167px;" width="17" height="15" viewBox="0 0 17 15"><path d="M3.5 12a4.5 4.2 0 0 1 9 0z" fill="#9ab4d0"/><g stroke="#7088a8" stroke-width="1"><path d="M0 0.5h16M0 3h16M0 5.5h16M0 8h16M0 10.5h16M0 13h16"/></g></svg><svg style="position:absolute;left:647px;top:167px;" width="17" height="15" viewBox="0 0 17 15"><g stroke="#6a80a0" stroke-width="1"><path d="M0 0.5h16M0 3h16M0 5.5h16M0 8h16M0 10.5h16M0 13h16"/></g><path d="M3.5 12a4.5 4.2 0 0 1 9 0z" fill="#3c4e6a"/></svg><svg style="position:absolute;left:690.5px;top:164.5px;" width="19" height="19" viewBox="0 0 19 19"><rect x="4.5" y="4.5" width="10.5" height="10" fill="#f0c070"/><path d="M1 8V1H8" fill="none" stroke="#555" stroke-width="1"/><path d="M18 11.5V18.5H11" fill="none" stroke="#555" stroke-width="1"/></svg><div class="t" style="left:468.4px;top:190px;font-size:9.2px;color:#444;font-weight:normal;transform:scaleX(0.9063);">Stile</div><div class="t" style="left:495.9px;top:190px;font-size:9.2px;color:#444;font-weight:normal;transform:scaleX(0.9312);">Riempimento</div><div class="t" style="left:554px;top:190px;font-size:9.2px;color:#444;font-weight:normal;transform:scaleX(0.9736);">Contorno</div><div class="t" style="left:607px;top:185px;font-size:9.2px;color:#444;font-weight:normal;transform:scaleX(0.9586);">Dietro</div><div class="t" style="left:604.4px;top:195px;font-size:9.2px;color:#444;font-weight:normal;transform:scaleX(0.9857);">al testo</div><div class="t" style="left:640.4px;top:185px;font-size:9.2px;color:#444;font-weight:normal;transform:scaleX(0.9180);">Davanti</div><div class="t" style="left:639.8px;top:195px;font-size:9.2px;color:#444;font-weight:normal;transform:scaleX(1.0025);">al testo</div><div class="t" style="left:685px;top:185px;font-size:9.2px;color:#444;font-weight:normal;transform:scaleX(0.9472);">Porta in</div><div class="t" style="left:676.6px;top:195px;font-size:9.2px;color:#444;font-weight:normal;transform:scaleX(0.9747);">primo piano</div><div style="position:absolute;left:458.6px;top:219.3px;width:167.7px;height:328.7px;background:#fff;border:1px solid #d0d0d0;box-sizing:border-box;box-shadow:1px 1px 2px rgba(0,0,0,0.08)"></div><div style="position:absolute;left:462px;top:223px;width:160px;height:20.5px;background:#fff;border:1px solid #a8a8a8;box-sizing:border-box"></div><div class="t" style="left:472.3px;top:228px;font-size:9.4px;color:#444;font-weight:bold;transform:scaleX(0.9266);">Cerca nei menu</div><div style="position:absolute;left:478px;top:283.5px;width:147px;height:15.7px;background:#e8e8e8"></div><div style="position:absolute;left:460px;top:323.4px;width:164.6px;height:17.6px;background:#c6c6c6"></div><div style="position:absolute;left:478px;top:360.5px;width:144px;height:1px;background:#e2e2e2"></div><div style="position:absolute;left:478px;top:415.2px;width:144px;height:1px;background:#e2e2e2"></div><div style="position:absolute;left:478px;top:435px;width:144px;height:1px;background:#e2e2e2"></div><div style="position:absolute;left:478px;top:472.4px;width:144px;height:1px;background:#e2e2e2"></div><div class="t" style="left:483.5px;top:251px;font-size:9.4px;color:#333;font-weight:normal;transform:scaleX(0.9504);">Ta<u>g</u>lia</div><div class="t" style="left:483.5px;top:269px;font-size:9.4px;color:#333;font-weight:normal;transform:scaleX(0.9300);"><u>C</u>opia</div><div class="t" style="left:483.5px;top:327px;font-size:9.4px;color:#333;font-weight:normal;transform:scaleX(0.9792);">Aggiungi te<u>s</u>to</div><div class="t" style="left:483.5px;top:346px;font-size:9.4px;color:#333;font-weight:normal;transform:scaleX(1.0059);">Modifica p<u>u</u>nti</div><div class="t" style="left:483.5px;top:365px;font-size:9.4px;color:#aaa;font-weight:normal;transform:scaleX(0.9334);">Raggruppa</div><div class="t" style="left:483.5px;top:384px;font-size:9.4px;color:#333;font-weight:normal;transform:scaleX(0.9807);">Porta <u>i</u>n primo piano</div><div class="t" style="left:483.5px;top:401px;font-size:9.4px;color:#333;font-weight:normal;transform:scaleX(0.9560);"><u>P</u>orta in secondo piano</div><div class="t" style="left:483.5px;top:421px;font-size:9.4px;color:#333;font-weight:normal;transform:scaleX(0.9730);">Co<u>l</u>legamento</div><div class="t" style="left:483.5px;top:441px;font-size:9.4px;color:#333;font-weight:normal;transform:scaleX(0.9270);">Inserisci <u>d</u>idascalia...</div><div class="t" style="left:483.5px;top:459px;font-size:9.4px;color:#333;font-weight:normal;transform:scaleX(0.9498);"><u>T</u>esto a capo</div><div class="t" style="left:483.5px;top:478px;font-size:9.4px;color:#333;font-weight:normal;transform:scaleX(0.9710);">Modifica <u>t</u>esto alternativo...</div><div class="t" style="left:483.5px;top:496px;font-size:9.4px;color:#333;font-weight:normal;transform:scaleX(0.9715);">Imposta come forma pre<u>d</u>efi...</div><div class="t" style="left:483.5px;top:514px;font-size:9.4px;color:#333;font-weight:normal;transform:scaleX(0.9661);">Altre opzioni la<u>y</u>out...</div><div class="t" style="left:483.5px;top:532px;font-size:9.4px;color:#333;font-weight:normal;transform:scaleX(0.9695);">F<u>o</u>rmato forma...</div><div class="t" style="left:484.2px;top:286px;font-size:9.4px;color:#444;font-weight:bold;transform:scaleX(0.8998);">Opzioni Incolla:</div><svg style="position:absolute;left:614.5px;top:366.2px;" width="4" height="7" viewBox="0 0 4 7"><path d="M0 0l3.5 3.5l-3.5 3.5z" fill="#c4c4c4"/></svg><svg style="position:absolute;left:614.5px;top:384.5px;" width="4" height="7" viewBox="0 0 4 7"><path d="M0 0l3.5 3.5l-3.5 3.5z" fill="#555"/></svg><svg style="position:absolute;left:614.5px;top:402.1px;" width="4" height="7" viewBox="0 0 4 7"><path d="M0 0l3.5 3.5l-3.5 3.5z" fill="#555"/></svg><svg style="position:absolute;left:614.5px;top:459.6px;" width="4" height="7" viewBox="0 0 4 7"><path d="M0 0l3.5 3.5l-3.5 3.5z" fill="#555"/></svg><div style="position:absolute;left:608px;top:383px;width:1px;height:12px;background:#e6e6e6"></div><div style="position:absolute;left:608px;top:401px;width:1px;height:12px;background:#e6e6e6"></div><svg style="position:absolute;left:462.5px;top:249.5px;" width="12" height="12" viewBox="0 0 12 12"><path d="M2.5 0.5l6.5 8M9.5 0.5l-6.5 8" stroke="#444" stroke-width="1.1"/><circle cx="2.8" cy="9.3" r="2.1" fill="none" stroke="#3a68b0" stroke-width="1.1"/><circle cx="9.2" cy="9.3" r="2.1" fill="none" stroke="#3a68b0" stroke-width="1.1"/></svg><svg style="position:absolute;left:462.5px;top:267.5px;" width="12" height="12" viewBox="0 0 12 12"><path d="M0.5 0.5h5l1.5 1.5v2M0.5 0.5v8h3" fill="none" stroke="#666" stroke-width="1"/><path d="M4.5 3.5h5l2 2v6h-7z" fill="#fff" stroke="#666" stroke-width="1"/><path d="M6 7h4M6 9h4" stroke="#888" stroke-width="0.8"/><path d="M2 3h2M2 5h1.5" stroke="#888" stroke-width="0.8"/></svg><svg style="position:absolute;left:462.5px;top:285px;" width="12" height="14" viewBox="0 0 12 14"><rect x="0.5" y="2" width="8.5" height="10.5" fill="#e8b860" stroke="#b08030" stroke-width="0.8"/><rect x="2.5" y="0.5" width="4.5" height="2.5" fill="#888"/><path d="M5 6.5h4.5l2 2v5h-6.5z" fill="#fff" stroke="#666" stroke-width="1"/></svg><svg style="position:absolute;left:481px;top:302px;" width="17" height="18" viewBox="0 0 17 18"><rect x="1" y="2.5" width="11" height="14.5" fill="#e8b860" stroke="#b08030" stroke-width="0.8"/><rect x="3.5" y="0.5" width="6" height="3.5" fill="#777"/><path d="M3 7h7M3 9.5h7M3 12h5" stroke="#fff" stroke-width="1"/><path d="M9 16l2-4l5-6l1 1l-5 6z" fill="#4a4a4a"/><path d="M7 17c1-1 2-3 3.5-3l.5 1.5c-1 1.2-2.5 1.5-4 1.5z" fill="#3a68b0"/></svg><svg style="position:absolute;left:504px;top:302px;" width="17" height="18" viewBox="0 0 17 18"><rect x="1" y="2.5" width="11" height="14.5" fill="#e8b860" stroke="#b08030" stroke-width="0.8"/><rect x="3.5" y="0.5" width="6" height="3.5" fill="#777"/><rect x="6.5" y="8.5" width="10" height="9" fill="#fff" stroke="#666" stroke-width="1"/><path d="M8 16l2.5-3l1.5 1.5l1.5-1l2 2.5z" fill="#3a68b0"/></svg><svg style="position:absolute;left:462.5px;top:326.5px;" width="12" height="10" viewBox="0 0 12 10"><rect x="0.5" y="0.5" width="11" height="9" fill="#fff" stroke="#666" stroke-width="1"/><path d="M7 3h3M7 5h3M2 7.5h8" stroke="#999" stroke-width="0.8"/><path d="M2 5.8l1.5-3.3l1.5 3.3" fill="none" stroke="#444" stroke-width="0.9"/></svg><svg style="position:absolute;left:462px;top:344px;" width="13" height="13" viewBox="0 0 13 13"><g fill="#4a5a80"><rect x="4" y="0" width="2.5" height="2.5"/><rect x="10" y="1" width="2.5" height="2.5"/><rect x="0" y="5" width="2.5" height="2.5"/><rect x="6" y="5.5" width="2.5" height="2.5"/><rect x="1" y="10" width="2.5" height="2.5"/><rect x="10" y="10" width="2.5" height="2.5"/></g><path d="M5 1.2h5M1.2 6l3-4.5M8 6.5l3 4M2.5 11h8" stroke="#8a9ac0" stroke-width="0.8" stroke-dasharray="1 1" fill="none"/></svg><svg style="position:absolute;left:462px;top:363px;" width="13" height="13" viewBox="0 0 13 13"><g fill="none" stroke="#c8c8c8" stroke-width="1"><rect x="1.5" y="1.5" width="10" height="10" stroke-dasharray="1.5 1.5"/><rect x="3.5" y="3.5" width="6" height="6"/></g><g fill="#c4c4c4"><rect x="0" y="0" width="2.5" height="2.5"/><rect x="10.5" y="0" width="2.5" height="2.5"/><rect x="0" y="10.5" width="2.5" height="2.5"/><rect x="10.5" y="10.5" width="2.5" height="2.5"/></g></svg><svg style="position:absolute;left:462.5px;top:382px;" width="12" height="12" viewBox="0 0 12 12"><rect x="0" y="0" width="8" height="8" fill="#f0bf6c"/><path d="M8 4h3.5v7.5h-7.5v-3.5" fill="none" stroke="#666" stroke-width="1"/></svg><svg style="position:absolute;left:462.5px;top:400px;" width="12" height="12" viewBox="0 0 12 12"><g fill="none" stroke="#666" stroke-width="1"><rect x="0.5" y="0.5" width="4.5" height="4.5"/><rect x="6.5" y="6.5" width="5" height="5"/></g><rect x="4" y="4" width="5" height="4.5" fill="#f0bf6c"/></svg><svg style="position:absolute;left:462px;top:419px;" width="13" height="13" viewBox="0 0 13 13"><circle cx="6" cy="5" r="4.3" fill="#fff" stroke="#555" stroke-width="1"/><path d="M1.7 5h8.6M6 0.7c-2 2.5-2 6 0 8.6M6 0.7c2 2.5 2 6 0 8.6" fill="none" stroke="#555" stroke-width="0.8"/><rect x="2" y="8" width="5" height="3.5" rx="1.7" fill="none" stroke="#3a68b0" stroke-width="1.2"/><rect x="6" y="8" width="5" height="3.5" rx="1.7" fill="none" stroke="#3a68b0" stroke-width="1.2"/></svg><svg style="position:absolute;left:462.5px;top:439px;" width="12" height="12" viewBox="0 0 12 12"><rect x="0.5" y="0.5" width="11" height="11" fill="#fff" stroke="#777" stroke-width="1"/><rect x="3" y="3" width="6" height="4.5" fill="none" stroke="#777" stroke-width="0.8"/><path d="M3 9.2h6" stroke="#777" stroke-width="0.8"/></svg><svg style="position:absolute;left:462px;top:457px;" width="13" height="12" viewBox="0 0 13 12"><path d="M0.5 1h12M0.5 11h12" stroke="#5a7098" stroke-width="1"/><path d="M3 9a3.5 3.5 0 0 1 7 0" fill="none" stroke="#3a68b0" stroke-width="1.6"/><path d="M0.5 3.5h3M9.5 3.5h3M0.5 6h2M10.5 6h2" stroke="#8aa0c0" stroke-width="0.8"/></svg><svg style="position:absolute;left:462px;top:476.5px;" width="14" height="13" viewBox="0 0 14 13"><rect x="0.5" y="0.5" width="10" height="10" fill="#fff" stroke="#666" stroke-width="1"/><path d="M2 9l2.5-3.5l2 2l1.5-1.5l2 3z" fill="#3a68b0"/><circle cx="4" cy="3.5" r="1" fill="#666"/><rect x="7" y="8" width="6.5" height="4.5" fill="#eee" stroke="#888" stroke-width="0.8"/></svg><svg style="position:absolute;left:462.5px;top:514.5px;" width="12" height="11" viewBox="0 0 12 11"><rect x="2.5" y="2.5" width="7" height="6" fill="#dce6f4" stroke="#555" stroke-width="1"/><path d="M2.5 0v2.5M9.5 0v2.5M2.5 8.5v2.5M9.5 8.5v2.5M0 2.5h2.5M9.5 2.5h2.5M0 8.5h2.5M9.5 8.5h2.5" stroke="#555" stroke-width="1"/></svg><svg style="position:absolute;left:461.5px;top:530.5px;" width="14" height="14" viewBox="0 0 14 14"><path d="M5 1l-3.5 3.5l4 4l3.5-3.5z" fill="#fff" stroke="#555" stroke-width="1"/><path d="M3.5 0.3v3.5" stroke="#555" stroke-width="1"/><path d="M9 4.5c1.2 .8 1.8 2 1.3 3" fill="none" stroke="#555" stroke-width="1"/><path d="M6 13l2-3l5-5l1 1l-5 5z" fill="#555"/><path d="M4.5 13.5c1-1 1.5-2.5 3-2.5l.5 1c-.8 1-2 1.5-3.5 1.5z" fill="#3a68b0"/></svg>
</body></html>
